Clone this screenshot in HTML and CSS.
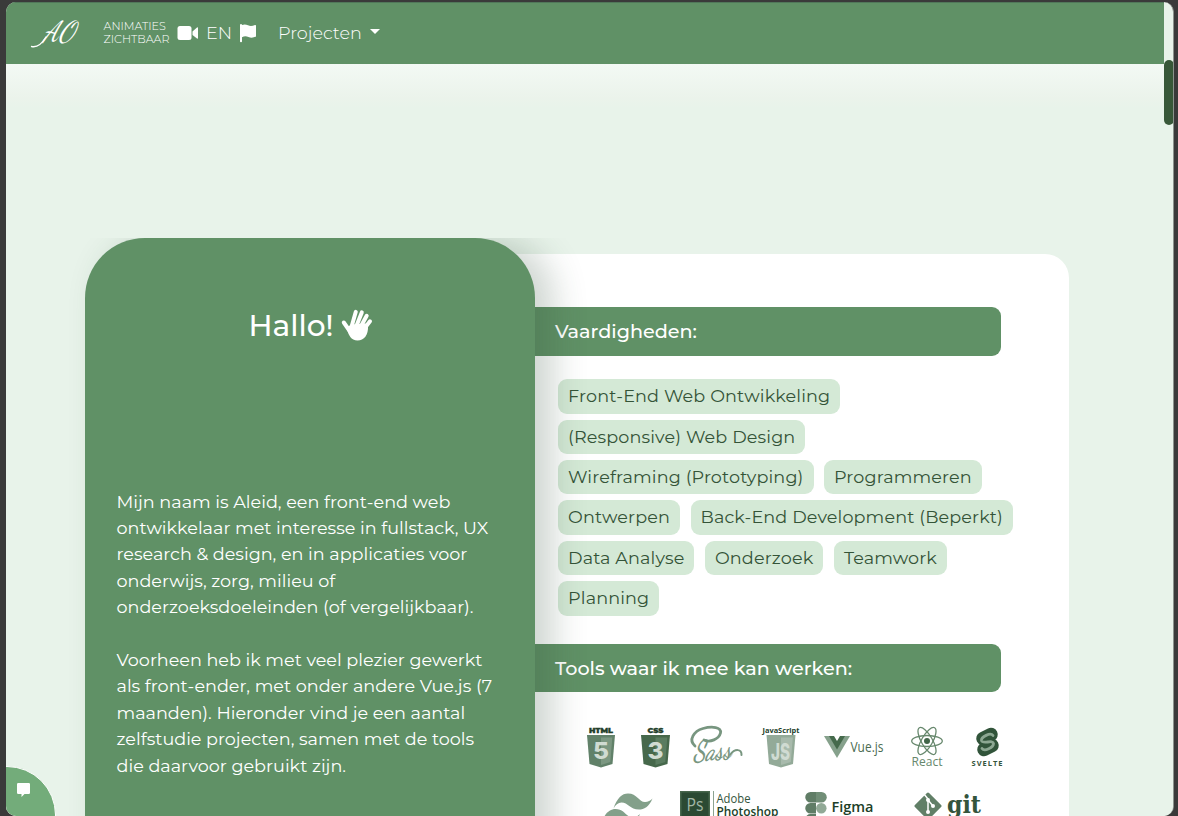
FILE: index.html
```html
<!DOCTYPE html>
<html lang="nl">
<head>
<meta charset="utf-8">
<title>Aleid</title>
<link rel="stylesheet" href="styles.css">
</head>
<body>
<div class="window">
  <header class="navbar">
    <svg class="brand" width="50" height="36" viewBox="0 0 50 36" role="img" aria-label="AO">
      <path d="M16 22C13 27 8 33 1.500 31.500" fill="none" stroke="#fff" stroke-width="1.300" stroke-linecap="round"/>
      <text class="brand-text" transform="translate(13 26) skewX(-18)" textLength="31" lengthAdjust="spacingAndGlyphs">AO</text>
    </svg>
    <a class="toggle"><span>ANIMATIES</span><span>ZICHTBAAR</span></a>
    <svg class="video" width="22" height="16" viewBox="0 0 22 16"><rect x="0.500" y="1" width="14" height="14" rx="2.500" fill="#fff"/><path d="M15.500 6.500 20 2.500Q21 2 21 3V13Q21 14 20 13.500L15.500 10Z" fill="#fff"/></svg>
    <a class="lang">EN</a>
    <svg class="flag" width="18" height="20" viewBox="0 0 18 20"><path d="M1 2Q1 1 2 1T3 2Q6 .8 9 2.300T16 2Q17 1.700 17 2.800V13.500Q13 15.500 9.500 14T3 14.300V18.500Q3 19.300 2 19.300T1 18.500Z" fill="#fff"/></svg>
    <a class="projects">Projecten</a>
    <span class="caret"></span>
  </header>
  <div class="scroll-track"><div class="scroll-thumb"></div></div>
  <main class="main">
    <section class="intro">
      <h1 class="hello"><span>Hallo!</span>
        <svg width="32" height="32" viewBox="0 0 32 32"><g fill="none" stroke="#fff" stroke-width="4" stroke-linecap="round"><path d="M2.800 13.500 8 21M10.500 18 14.800 2.800M15 18 20.800 3.400M19 19 25.700 6.800M23 20 29 12.300"/></g><path d="M5.500 19 10 15.500 25 14.500 27 17C27.500 26 23 31.500 16.500 31.500C10 31.500 7.500 26 5.500 19Z" fill="#fff"/></svg>
      </h1>
      <p class="para"><span>Mijn naam is Aleid, een front-end web</span><span>ontwikkelaar met interesse in fullstack, UX</span><span>research &amp; design, en in applicaties voor</span><span>onderwijs, zorg, milieu of</span><span>onderzoeksdoeleinden (of vergelijkbaar).</span></p>
      <p class="para"><span>Voorheen heb ik met veel plezier gewerkt</span><span>als front-ender, met onder andere Vue.js (7</span><span>maanden). Hieronder vind je een aantal</span><span>zelfstudie projecten, samen met de tools</span><span>die daarvoor gebruikt zijn.</span></p>
    </section>
    <section class="card">
      <h2 class="bar">Vaardigheden:</h2>
      <ul class="pills">
        <li>Front-End Web Ontwikkeling</li>
        <li>(Responsive) Web Design</li>
        <li>Wireframing (Prototyping)</li>
        <li>Programmeren</li>
        <li>Ontwerpen</li>
        <li>Back-End Development (Beperkt)</li>
        <li>Data Analyse</li>
        <li>Onderzoek</li>
        <li>Teamwork</li>
        <li>Planning</li>
      </ul>
      <h2 class="bar">Tools waar ik mee kan werken:</h2>
      <div class="tools">
        <svg class="t-html" width="30" height="42" viewBox="0 0 30 42"><text x="3" y="6.500" class="tag" textLength="24" lengthAdjust="spacingAndGlyphs">HTML</text><path d="M1 9H29L26.500 38 15 41.500 3.500 38Z" fill="#618169"/><path d="M15 11.500H26.300L24.300 36 15 39Z" fill="#7b9781"/><text x="15" y="32.500" class="shield" textLength="16" lengthAdjust="spacingAndGlyphs">5</text></svg>
        <svg class="t-css" width="30" height="42" viewBox="0 0 30 42"><text x="7.500" y="6.500" class="tag" textLength="16" lengthAdjust="spacingAndGlyphs">CSS</text><path d="M1 9H30L27.500 38 15.500 41.500 3.500 38Z" fill="#46684b"/><path d="M15.500 11.500H27.300L25.300 36 15.500 39Z" fill="#5a7c60"/><text x="15.500" y="32.500" class="shield" textLength="16" lengthAdjust="spacingAndGlyphs">3</text></svg>
        <svg class="t-sass" width="54" height="42" viewBox="0 0 54 42"><path d="M6 20C-1 14 5 5 14 2.500C23 0 33 1 31.500 7C30 13 21 17 15 14" fill="none" stroke="#789680" stroke-width="2.800" stroke-linecap="round"/><text class="sass" transform="translate(4 35) rotate(-4) skewX(-14)" textLength="38" lengthAdjust="spacingAndGlyphs">Sass</text><path d="M41 29C46 22 53 23 52.500 29" fill="none" stroke="#789680" stroke-width="2" stroke-linecap="round"/></svg>
        <svg class="t-js" width="38" height="42" viewBox="0 0 38 42"><text x="0.500" y="7" class="tag js" textLength="37" lengthAdjust="spacingAndGlyphs">JavaScript</text><path d="M4.500 9H33.500L31 38 19 41.500 7 38Z" fill="#93aa98"/><path d="M19 11.500H30.800L28.800 36 19 39Z" fill="#a8baac"/><text x="18.500" y="34" class="shield" textLength="19" lengthAdjust="spacingAndGlyphs">JS</text></svg>
        <svg class="t-vue" width="60" height="24" viewBox="0 0 60 24"><path d="M0 1H26L13 23Z" fill="#86a18c"/><path d="M5 1H21L13 14.500Z" fill="#456a4c"/><path d="M10 1H16L13 6Z" fill="#fff"/><text x="26.500" y="17" class="vue" textLength="33" lengthAdjust="spacingAndGlyphs">Vue.js</text></svg>
        <svg class="t-react" width="34" height="42" viewBox="0 0 34 42"><g fill="none" stroke="#67886d" stroke-width="1.300"><ellipse cx="17" cy="15" rx="15.300" ry="5.500"/><ellipse cx="17" cy="15" rx="15.300" ry="5.500" transform="rotate(60 17 15)"/><ellipse cx="17" cy="15" rx="15.300" ry="5.500" transform="rotate(120 17 15)"/></g><circle cx="17" cy="15" r="3" fill="#426549"/><text x="1.500" y="40" class="react" textLength="31" lengthAdjust="spacingAndGlyphs">React</text></svg>
        <svg class="t-svelte" width="32" height="42" viewBox="0 0 32 42"><path d="M12 12.500 20 8.500M13 23.500 21 19.500" stroke="#31543a" stroke-width="13.500" stroke-linecap="round"/><path d="M22 9.500C19.500 6 10 11 10.500 14.500C11.500 19 22 13 22.500 17.500C22.500 21.500 13.500 26 11 22.500" fill="none" stroke="#8ca792" stroke-width="2.800" stroke-linecap="round"/><text x="0.500" y="39.500" class="svelte" textLength="31">SVELTE</text></svg>
        <svg class="t-tail" width="52" height="32" viewBox="0 0 52 32"><g fill="#83a08a"><path d="M12.500 15.500C16 5 21 .5 27 .5C36 .5 38 9 44 9C47 9 49.500 7.500 51.500 5.500C48 14 43 16.500 38 16.500C29 16.500 27 9.500 20.500 9.500C17 9.500 14.500 12 12.500 15.500Z"/><path transform="translate(-12.500 15.500)" d="M12.500 15.500C16 5 21 .5 27 .5C36 .5 38 9 44 9C47 9 49.500 7.500 51.500 5.500C48 14 43 16.500 38 16.500C29 16.500 27 9.500 20.500 9.500C17 9.500 14.500 12 12.500 15.500Z"/></g></svg>
        <svg class="t-ps" width="100" height="36" viewBox="0 0 100 36"><rect x=".75" y=".75" width="28.500" height="32" fill="#2b4a33" stroke="#47664c" stroke-width="1.500"/><text x="6.500" y="20" class="ps" textLength="17" lengthAdjust="spacingAndGlyphs">Ps</text><path d="M33.500 0V36" stroke="#8ba390"/><text x="36.500" y="11.500" class="adobe" textLength="34" lengthAdjust="spacingAndGlyphs">Adobe</text><text x="36.500" y="25" class="adobe bold" textLength="62" lengthAdjust="spacingAndGlyphs">Photoshop</text></svg>
        <svg class="t-figma" width="70" height="34" viewBox="0 0 70 34"><path d="M11 0V10.500H5.500A5.250 5.250 0 0 1 5.500 0ZM11 11V21.500H5.500A5.250 5.250 0 0 1 5.500 11ZM11 22V32H5.500A5 5 0 0 1 5.500 22Z" fill="#607d66"/><path d="M11 0H16.500A5.250 5.250 0 0 1 16.500 10.500H11Z" fill="#718e77"/><circle cx="16.300" cy="16.200" r="5.250" fill="#91a996"/><text x="26.500" y="19.500" class="figma" textLength="42" lengthAdjust="spacingAndGlyphs">Figma</text></svg>
        <svg class="t-git" width="70" height="36" viewBox="0 0 70 36"><rect x="5" y="5" width="20" height="20" rx="1.500" transform="rotate(45 15 15)" fill="#617f67"/><path d="M11 3 15 8V21M15 9 20 15" fill="none" stroke="#fff" stroke-width="1.500"/><g fill="#fff"><circle cx="15" cy="9" r="2"/><circle cx="15" cy="21" r="2"/><circle cx="20" cy="15" r="2"/></g><text x="34" y="21.500" class="git" textLength="34" lengthAdjust="spacingAndGlyphs">git</text></svg>
      </div>
    </section>
  </main>
  <button class="chat" aria-label="Chat"><svg width="14" height="14" viewBox="0 0 14 14"><path d="M1.200 0H11.800Q13 0 13 1.200V9.800Q13 11 11.800 11H7.500L4.500 14V11H1.200Q0 11 0 9.800V1.200Q0 0 1.200 0Z" fill="#fff"/></svg></button>
</div>
</body>
</html>
```
FILE: styles.css
```css
* { box-sizing: border-box; }
body {
  margin: 0;
  height: 816px;
  overflow: hidden;
  background: #3a3a3a;
  padding: 2px 4px 0 6px;
  font-family: Montserrat, Inter, sans-serif;
}
h1, h2, p, ul { margin: 0; padding: 0; }
.window {
  position: relative;
  height: 814px;
  border-radius: 10px;
  overflow: hidden;
  background: #e8f3ea;
  border-right: 1px solid #8b928c;
}
.navbar {
  height: 62px;
  width: 1158px;
  padding-bottom: 2px;
  background: #609166;
  color: #fff;
  display: flex;
  align-items: center;
  border-top: 1px solid #51785a;
}
.brand { margin-left: 24px; overflow: visible; }
.brand-text { font: 400 29px "Dancing Script", "Caveat", cursive; fill: #fff; }
.toggle { margin-left: 23.500px; width: 66.500px; font-size: 11.200px; line-height: 13px; white-space: nowrap; font-weight: 300; }
.toggle span { display: block; }
.video { margin-left: 7px; }
.lang { margin-left: 7px; width: 26px; font-size: 17.600px; font-weight: 300; }
.flag { margin-left: 7px; }
.projects { margin-left: 21px; width: 84px; font-size: 17.600px; font-weight: 300; }
.caret { margin: -3px 0 0 8px; border: 5px solid transparent; border-top-color: #fff; border-bottom: 0; }
.scroll-track { position: absolute; right: -1px; top: 0; width: 10px; height: 814px; }
.scroll-thumb { margin-top: 58px; height: 65px; border-radius: 5px; background: #385839; }
.main {
  height: 752px;
  padding: 174px 0 0 79px;
  display: flex;
  align-items: flex-start;
  background: linear-gradient(#f3f9f4, #ebf3eb 34px, #e8f3ea 44px);
}
.intro {
  position: relative;
  z-index: 1;
  flex: none;
  width: 450px;
  height: 640px;
  padding: 67px 0 0 31.500px;
  border-radius: 60px 60px 0 0;
  background: #609166;
  color: #fff;
  box-shadow: 18px 0 34px rgba(45, 75, 52, .23);
  clip-path: inset(0 -80px 0 -20px);
}
.hello {
  display: flex;
  align-items: center;
  gap: 6px;
  height: 40px;
  margin: 0 0 143.500px 132px;
  font-size: 29.600px;
  font-weight: 500;
}
.hello span { width: 86px; white-space: nowrap; }
.para { margin-bottom: 26.400px; font-size: 17.600px; line-height: 26.400px; }
.para span { display: block; white-space: nowrap; }
.card {
  flex: none;
  width: 594px;
  height: 640px;
  margin: 16px 0 0 -60px;
  padding: 53px 0 0 60px;
  border-radius: 0 24px 0 0;
  background: #fff;
}
.bar {
  width: 466px;
  height: 48.500px;
  padding: 0 0 0 20px;
  border-radius: 0 9px 9px 0;
  background: #609166;
  color: #fff;
  font-size: 19.200px;
  font-weight: 500;
  line-height: 49px;
  white-space: nowrap;
}
.pills {
  list-style: none;
  display: flex;
  flex-wrap: wrap;
  gap: 6px 10.500px;
  width: 480px;
  margin: 23.700px 0 28.300px 23px;
}
.pills li {
  height: 34.400px;
  padding: 0 10px;
  border-radius: 9px;
  background: #d4e9d6;
  color: #345438;
  font-size: 17.600px;
  line-height: 34.400px;
  letter-spacing: .13px;
  white-space: nowrap;
}
.tools { display: flex; flex-wrap: wrap; align-items: center; row-gap: 23px; padding: 33.500px 60px 0 51px; }
.tools svg { flex: none; overflow: visible; }
.t-css { margin-left: 24px; }
.t-sass { margin-left: 19px; }
.t-js { margin-left: 19px; }
.t-vue { margin-left: 24px; }
.t-react { margin-left: 26px; }
.t-svelte { margin-left: 27px; }
.t-tail { margin-left: 15px; }
.t-ps { margin-left: 27px; }
.t-figma { margin-left: 25px; }
.t-git { margin-left: 38px; }
.tag { font: 900 7.500px Montserrat, sans-serif; fill: #243f2b; stroke: #243f2b; stroke-width: .3px; }
.js { stroke: none; font: bold 7.500px "Open Sans", sans-serif; }
.shield { font: 800 23px Inter, sans-serif; fill: #d0dbd2; text-anchor: middle; }
.sass { font: bold 29px "Dancing Script", "Caveat", cursive; fill: #789680; }
.vue { font: 14px "Open Sans", sans-serif; fill: #4b6c52; }
.react { font: 12px "Open Sans", sans-serif; fill: #67886d; }
.svelte { font: bold 7.500px "Open Sans", sans-serif; fill: #34543c; }
.ps { font: 18px "Open Sans", sans-serif; fill: #a2b7a6; }
.adobe { font: 12px "Open Sans", sans-serif; fill: #34543c; }
.bold { font-weight: 600; fill: #203f28; }
.figma { font: 600 15px "Open Sans", sans-serif; fill: #203f28; }
.git { font: bold 25px "DejaVu Serif", serif; fill: #34543c; }
.chat {
  position: absolute;
  left: -48px;
  bottom: -48px;
  width: 98px;
  height: 98px;
  padding: 16px 0 0 58px;
  display: flex;
  border: 1.500px solid #fff;
  border-radius: 50%;
  background: #73ac7a;
}
```
